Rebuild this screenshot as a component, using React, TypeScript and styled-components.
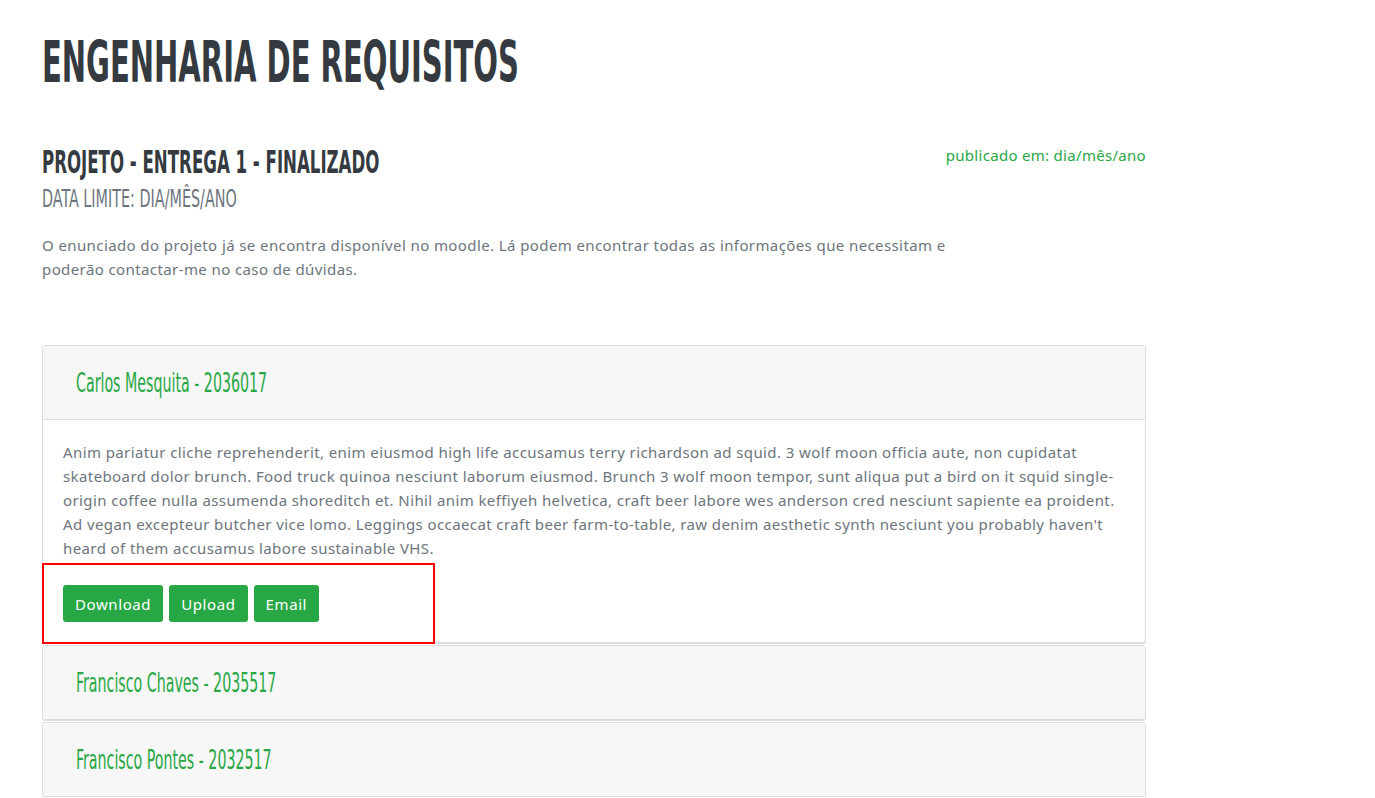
import React from "react";
import styled, { createGlobalStyle, css } from "styled-components";

const Global = createGlobalStyle`
  html, body { margin: 0; padding: 0; background: #fff; }
  body { font-family: "Noto Sans", "Open Sans", sans-serif; letter-spacing: 0.4px; }
  * { box-sizing: border-box; }
`;

const condensed = css`
  font-family: "Liberation Sans Narrow", "DejaVu Sans Condensed", sans-serif;
  display: inline-block;
  transform-origin: left center;
  white-space: nowrap;
  letter-spacing: 0;
`;

const Page = styled.div`
  padding: 26px 0 0 42px;
  width: 1146px;
`;

const Title = styled.h1`
  ${condensed};
  margin: 0;
  font-size: 57px;
  line-height: 72px;
  font-weight: 700;
  color: #343a40;
  transform: scaleX(0.566);
`;

const PostHead = styled.div`
  display: flex;
  justify-content: space-between;
  align-items: flex-start;
  margin-top: 46px;
`;

const PostTitles = styled.div`
  display: flex;
  flex-direction: column;
  gap: 4px;
`;

const PostTitle = styled.h2`
  ${condensed};
  margin: 0;
  font-size: 32px;
  line-height: 36px;
  font-weight: 700;
  color: #343a40;
  transform: scaleX(0.577);
`;

const Deadline = styled.h3`
  ${condensed};
  margin: 0;
  font-size: 24px;
  line-height: 30px;
  font-weight: 400;
  color: #6c757d;
  transform: scaleX(0.666);
`;

const Published = styled.span`
  font-size: 15px;
  line-height: 20px;
  color: #28a745;
  margin-top: 1px;
  letter-spacing: 0.3px;
`;

const Intro = styled.p`
  margin: 19px 0 0;
  width: 955px;
  font-size: 15px;
  line-height: 24px;
  color: #6c757d;
`;

const Accordion = styled.div`
  margin-top: 64px;
  width: 1104px;
  display: flex;
  flex-direction: column;
  gap: 2px;
`;

const Card = styled.div`
  border: 1px solid #dcdcdc;
  border-radius: 3px;
  box-shadow: 0 1px 0 #dcdcdc;
  background: #fff;
`;

const CardHeader = styled.div<{ $open?: boolean }>`
  height: ${(p) => (p.$open ? 74 : 73)}px;
  background: #f7f7f7;
  padding: 0 33px;
  display: flex;
  align-items: center;
  border-bottom: ${(p) => (p.$open ? "1px solid #dcdcdc" : "none")};
`;

const StudentName = styled.span`
  ${condensed};
  font-size: 27px;
  font-weight: 400;
  color: #28a745;
  transform: scaleX(0.585);
`;

const CardBody = styled.div`
  position: relative;
  padding: 20px;
`;

const BodyText = styled.p`
  margin: 0;
  font-size: 15px;
  line-height: 24px;
  color: #6c757d;
`;

const Actions = styled.div`
  display: flex;
  gap: 6px;
  margin-top: 25px;
`;

const Button = styled.button`
  height: 37px;
  padding: 0 12px;
  border: none;
  border-radius: 3px;
  background: #28a745;
  color: #fff;
  font-family: "Noto Sans", sans-serif;
  font-size: 15px;
  letter-spacing: 0.6px;
  cursor: pointer;
`;

const Highlight = styled.div`
  position: absolute;
  left: -1px;
  bottom: -2px;
  width: 393px;
  height: 81px;
  border: 2px solid #ff0000;
  pointer-events: none;
`;

const students = [
  { name: "Carlos Mesquita - 2036017", open: true },
  { name: "Francisco Chaves - 2035517", open: false },
  { name: "Francisco Pontes - 2032517", open: false },
];

export default function App() {
  return (
    <>
      <Global />
      <Page>
        <Title>ENGENHARIA DE REQUISITOS</Title>
        <PostHead>
          <PostTitles>
            <div><PostTitle>PROJETO - ENTREGA 1 - FINALIZADO</PostTitle></div>
            <div><Deadline>DATA LIMITE: DIA/MÊS/ANO</Deadline></div>
          </PostTitles>
          <Published>publicado em: dia/mês/ano</Published>
        </PostHead>
        <Intro>
          O enunciado do projeto já se encontra disponível no moodle. Lá podem encontrar todas as
          informações que necessitam e poderão contactar-me no caso de dúvidas.
        </Intro>
        <Accordion>
          {students.map((s) => (
            <Card key={s.name}>
              <CardHeader $open={s.open}>
                <StudentName>{s.name}</StudentName>
              </CardHeader>
              {s.open && (
                <CardBody>
                  <BodyText>
                    Anim pariatur cliche reprehenderit, enim eiusmod high life accusamus terry
                    richardson ad squid. 3 wolf moon officia aute, non cupidatat skateboard dolor
                    brunch. Food truck quinoa nesciunt laborum eiusmod. Brunch 3 wolf moon tempor,
                    sunt aliqua put a bird on it squid single-origin coffee nulla assumenda
                    shoreditch et. Nihil anim keffiyeh helvetica, craft beer labore wes anderson
                    cred nesciunt sapiente ea proident. Ad vegan excepteur butcher vice lomo.
                    Leggings occaecat craft beer farm-to-table, raw denim aesthetic synth nesciunt
                    you probably haven't heard of them accusamus labore sustainable VHS.
                  </BodyText>
                  <Actions>
                    <Button>Download</Button>
                    <Button>Upload</Button>
                    <Button>Email</Button>
                  </Actions>
                  <Highlight />
                </CardBody>
              )}
            </Card>
          ))}
        </Accordion>
      </Page>
    </>
  );
}
